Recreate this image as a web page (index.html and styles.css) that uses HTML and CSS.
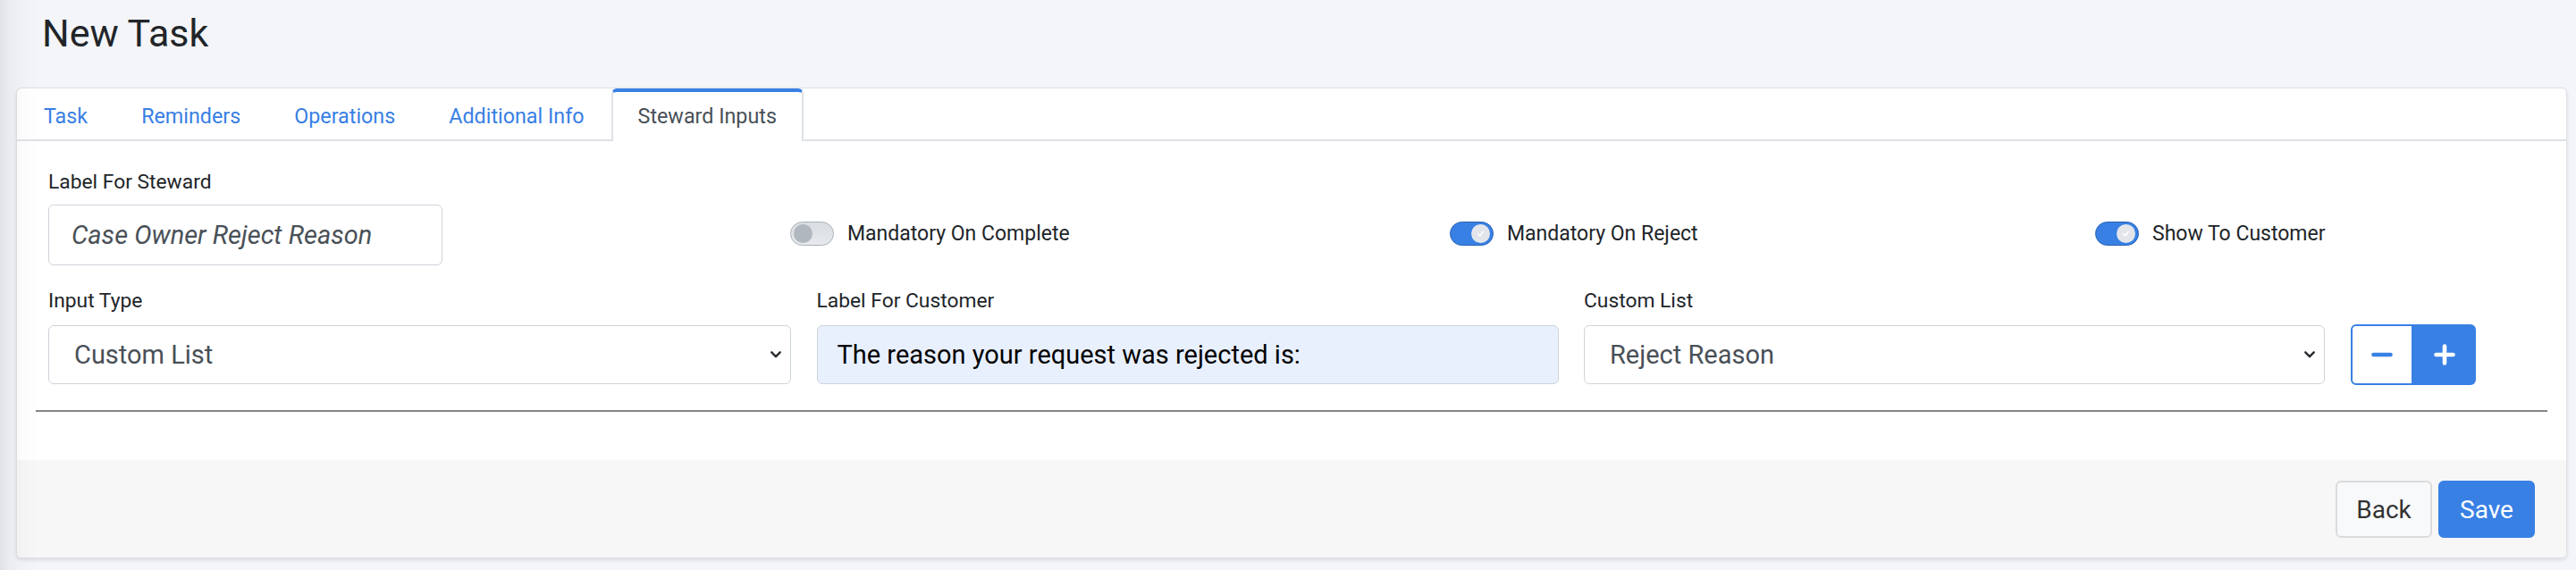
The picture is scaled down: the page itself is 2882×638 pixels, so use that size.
FILE: index.html
```html
<!DOCTYPE html>
<html lang="en">
<head>
<meta charset="utf-8">
<title>New Task</title>
<link rel="stylesheet" href="styles.css">
</head>
<body>
<div class="shade"></div>
<main class="page">
  <h1 class="title">New Task</h1>
  <section class="card">
    <nav class="tabs">
      <a class="tab">Task</a>
      <a class="tab">Reminders</a>
      <a class="tab">Operations</a>
      <a class="tab">Additional Info</a>
      <a class="tab active">Steward Inputs</a>
    </nav>
    <div class="card-body">
      <div class="row-top">
        <div class="field field-short">
          <label class="label">Label For Steward</label>
          <input class="control control-italic" placeholder="Case Owner Reject Reason">
        </div>
        <div class="switch-cell">
          <span class="switch"><span class="knob"></span></span>
          <span class="switch-label">Mandatory On Complete</span>
        </div>
        <div class="switch-cell">
          <span class="switch on"><span class="knob"><svg class="check" viewBox="0 0 10 10"><path d="M2.5 5.4 L4.3 7.2 L7.6 3" /></svg></span></span>
          <span class="switch-label">Mandatory On Reject</span>
        </div>
        <div class="switch-cell">
          <span class="switch on"><span class="knob"><svg class="check" viewBox="0 0 10 10"><path d="M2.5 5.4 L4.3 7.2 L7.6 3" /></svg></span></span>
          <span class="switch-label">Show To Customer</span>
        </div>
      </div>
      <div class="row-bottom">
        <div class="field">
          <label class="label">Input Type</label>
          <div class="select-wrap">
            <select class="control select"><option>Custom List</option></select>
            <svg class="chevron" viewBox="0 0 12 8"><path d="M1.3 1.3 L6 6.2 L10.7 1.3" /></svg>
          </div>
        </div>
        <div class="field">
          <label class="label">Label For Customer</label>
          <input class="control control-filled" value="The reason your request was rejected is:">
        </div>
        <div class="field">
          <label class="label">Custom List</label>
          <div class="select-wrap">
            <select class="control select"><option>Reject Reason</option></select>
            <svg class="chevron" viewBox="0 0 12 8"><path d="M1.3 1.3 L6 6.2 L10.7 1.3" /></svg>
          </div>
        </div>
        <div class="btn-group">
          <button class="icon-btn icon-btn-outline" aria-label="Remove">
            <svg viewBox="0 0 24 24"><path d="M2.5 12 H21.5" /></svg>
          </button>
          <button class="icon-btn icon-btn-solid" aria-label="Add">
            <svg viewBox="0 0 24 24"><path d="M12 2.5 V21.5 M2.5 12 H21.5" /></svg>
          </button>
        </div>
      </div>
      <hr class="divider">
    </div>
    <footer class="card-footer">
      <button class="btn btn-light">Back</button>
      <button class="btn btn-primary">Save</button>
    </footer>
  </section>
</main>
</body>
</html>
```

FILE: styles.css
```css
* { box-sizing: border-box; }

html, body {
  margin: 0;
  padding: 0;
}

body {
  background: #f4f5f9;
  font-family: Roboto, "Liberation Sans", Arial, sans-serif;
  color: #212529;
  width: 2882px;
  height: 638px;
  overflow: hidden;
}

.shade {
  position: fixed;
  left: 0;
  top: 0;
  bottom: 0;
  width: 44px;
  pointer-events: none;
  z-index: 5;
  background: linear-gradient(to right, rgba(0,0,0,0.075) 0, rgba(0,0,0,0.035) 10px, rgba(0,0,0,0.012) 26px, rgba(0,0,0,0) 44px);
}

.page {
  padding: 12px 10px 0 18px;
}

.title {
  margin: 0 0 36px 29px;
  font-size: 43px;
  line-height: 50px;
  font-weight: 400;
  color: #212529;
}

.card {
  background: #fff;
  border: 1px solid #dfe2e6;
  border-radius: 6px;
  box-shadow: 0 2px 4px rgba(0,0,0,0.10);
  overflow: hidden;
}

.tabs {
  display: flex;
  height: 59px;
  border-bottom: 2px solid #dee2e6;
}

.tab {
  display: block;
  height: 59px;
  margin-bottom: -2px;
  padding: 0 28px;
  border: 2px solid transparent;
  border-top-width: 4px;
  border-bottom: 0;
  border-radius: 6px 6px 0 0;
  font-size: 23.3px;
  line-height: 54px;
  color: #3880e4;
  white-space: nowrap;
}

.tab.active {
  background: #fff;
  color: #495057;
  border-color: #dee2e6;
  border-top-color: #3880e4;
}

.card-body {
  padding: 34px 21px 54px;
}

.label {
  display: block;
  font-size: 22.8px;
  line-height: 24px;
  color: #212529;
  margin-bottom: 13px;
}

.row-top {
  display: grid;
  grid-template-columns: 830px 738px 722px 1fr;
  align-items: end;
  padding: 0 14px;
}

.field-short {
  width: 441px;
}

.control {
  display: block;
  width: 100%;
  height: 66px;
  margin: 0;
  border: 1px solid #ced4da;
  border-radius: 6px;
  background: #fff;
  font-family: Roboto, "Liberation Sans", Arial, sans-serif;
  font-size: 29px;
  color: #495057;
  padding: 0 28px;
  outline: none;
}

.control-italic {
  height: 68px;
  font-style: italic;
  padding-left: 25px;
}

.control-italic::placeholder {
  color: #495057;
  opacity: 1;
  font-style: italic;
}

.control-filled {
  background: #e8f0fe;
  color: #000;
  padding: 0 22px;
}

.switch-cell {
  display: flex;
  align-items: center;
  height: 68px;
  padding-bottom: 3px;
}

.switch {
  position: relative;
  display: block;
  flex: none;
  width: 49px;
  height: 27px;
  border-radius: 14px;
  border: 1px solid #aab1b9;
  background: linear-gradient(to bottom, #d9dde2, #e6e9ed);
}

.switch .knob {
  position: absolute;
  top: 2px;
  left: 3px;
  width: 21px;
  height: 21px;
  border-radius: 50%;
  background: #b1b7be;
}

.switch.on {
  background: #3880e4;
  border-color: #2a63b5;
}

.switch.on .knob {
  left: auto;
  right: 3px;
  background: #e2e6eb;
}

.check {
  position: absolute;
  left: 5px;
  top: 5px;
  width: 11px;
  height: 11px;
  fill: none;
  stroke: #fff;
  stroke-width: 1.4;
  stroke-linecap: round;
  stroke-linejoin: round;
}

.switch-label {
  margin-left: 15px;
  font-size: 23px;
  line-height: 26px;
  color: #212529;
  white-space: nowrap;
}

.row-bottom {
  display: grid;
  grid-template-columns: 831px 830px 829px auto;
  column-gap: 28.5px;
  align-items: end;
  padding: 0 14px;
  margin-top: 28px;
}

.row-bottom .label {
  margin-bottom: 15px;
}

.select-wrap {
  position: relative;
}

.select {
  appearance: none;
  -webkit-appearance: none;
  padding-right: 50px;
}

.chevron {
  position: absolute;
  right: 11px;
  top: 29px;
  width: 12px;
  height: 8px;
  fill: none;
  stroke: #2b2f33;
  stroke-width: 2.4;
  stroke-linecap: round;
  stroke-linejoin: round;
  pointer-events: none;
}

.btn-group {
  display: flex;
  margin-bottom: -1px;
}

.icon-btn {
  display: flex;
  align-items: center;
  justify-content: center;
  width: 70px;
  height: 68px;
  margin: 0;
  padding: 0;
  border: 2px solid #3880e4;
}

.icon-btn svg {
  width: 24px;
  height: 24px;
  fill: none;
  stroke-width: 4.6;
  stroke-linecap: round;
}

.icon-btn-outline {
  background: #fff;
  border-radius: 6px 0 0 6px;
}

.icon-btn-outline svg {
  stroke: #3880e4;
}

.icon-btn-solid {
  background: #3880e4;
  border-radius: 0 6px 6px 0;
}

.icon-btn-solid svg {
  stroke: #fff;
}

.divider {
  margin: 29px 0 0;
  height: 2px;
  border: 0;
  background: #858585;
}

.card-footer {
  display: flex;
  justify-content: flex-end;
  gap: 7px;
  background: #f7f7f7;
  padding: 23px 35px 22px;
}

.btn {
  width: 108px;
  height: 64px;
  margin: 0;
  border-radius: 6px;
  font-family: Roboto, "Liberation Sans", Arial, sans-serif;
  font-size: 28px;
  padding: 0;
}

.btn-light {
  background: #f8f9fa;
  border: 2px solid #dcdcdc;
  color: #333;
}

.btn-primary {
  background: #3880e4;
  border: 2px solid #3880e4;
  color: #fff;
}
```
